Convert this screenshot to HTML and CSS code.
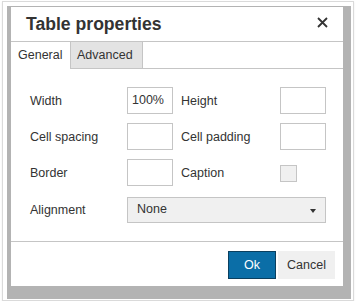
FILE: index.html
```html
<!DOCTYPE html>
<html>
<head>
<meta charset="utf-8">
<link rel="stylesheet" href="styles.css">
</head>
<body>
<div class="frame">
  <div class="backdrop">
    <div class="dialog">
      <div class="head">
        <h1 class="title">Table properties</h1>
        <span class="close" aria-label="Close">
          <svg width="11" height="11" viewBox="0 0 11 11"><path d="M1 1L10 10M10 1L1 10" stroke="#333" stroke-width="1.8" fill="none"/></svg>
        </span>
      </div>
      <div class="tabs">
        <div class="tab tab-general active">General</div>
        <div class="tab tab-advanced">Advanced</div>
        <div class="tab-fill"></div>
      </div>
      <div class="body">
        <div class="row">
          <span class="lbl">Width</span>
          <span class="input">100%</span>
          <span class="lbl lbl-r">Height</span>
          <span class="input"></span>
        </div>
        <div class="row">
          <span class="lbl">Cell spacing</span>
          <span class="input"></span>
          <span class="lbl lbl-r">Cell padding</span>
          <span class="input"></span>
        </div>
        <div class="row">
          <span class="lbl">Border</span>
          <span class="input"></span>
          <span class="lbl lbl-r">Caption</span>
          <span class="check-wrap"><span class="check"></span></span>
        </div>
        <div class="row row-select">
          <span class="lbl">Alignment</span>
          <span class="select">None<span class="caret"></span></span>
        </div>
      </div>
      <div class="foot">
        <span class="btn btn-ok">Ok</span>
        <span class="btn btn-cancel">Cancel</span>
      </div>
    </div>
  </div>
</div>
</body>
</html>
```
FILE: styles.css
```css
* { box-sizing: border-box; }
html, body { margin: 0; padding: 0; background: #fff; }
body {
  font-family: "Liberation Sans", Arial, Helvetica, sans-serif;
  font-size: 12.5px;
  color: #333;
}
.frame {
  margin: 1px 0 0 2px;
  width: 352px;
  height: 300px;
  border: 1px solid #dadada;
  padding: 4px 0 0 4px;
  box-shadow: 0 1px 2px rgba(0,0,0,0.08);
}
.backdrop {
  width: 344px;
  height: 293px;
  background: #b3b3b3;
  padding: 1px 8px 0 4px;
}
.dialog {
  width: 332px;
  height: 279px;
  background: #fff;
  display: flex;
  flex-direction: column;
}
.head {
  height: 35px;
  border-bottom: 1px solid #c5c5c5;
  display: flex;
  align-items: center;
  justify-content: space-between;
  padding: 0 15px 1px 15px;
}
.title {
  margin: 0;
  font-size: 17.6px;
  font-weight: bold;
  color: #333;
  line-height: 20px;
}
.close {
  width: 11px;
  height: 11px;
  display: block;
  margin-top: -3px;
}
.close svg { display: block; }
.tabs {
  height: 27px;
  display: flex;
}
.tab {
  height: 27px;
  line-height: 26px;
  border-right: 1px solid #c5c5c5;
  color: #333;
}
.tab-general {
  width: 60px;
  padding-left: 7px;
  background: #fff;
}
.tab-advanced {
  width: 72px;
  padding-left: 6px;
  background: #e3e3e3;
  border-bottom: 1px solid #c5c5c5;
}
.tab-fill {
  flex: 1;
  border-bottom: 1px solid #c5c5c5;
}
.body {
  height: 172px;
  padding: 18px 0 0 19px;
  display: flex;
  flex-direction: column;
  gap: 9px;
}
.row {
  display: flex;
  align-items: center;
  height: 27px;
}
.row-select {
  margin-top: 2px;
  height: 26px;
}
.lbl {
  width: 97px;
  color: #333;
}
.lbl-r {
  width: 107px;
  padding-left: 8px;
}
.input {
  width: 46px;
  height: 27px;
  border: 1px solid #c5c5c5;
  background: #fff;
  line-height: 25px;
  padding-left: 4px;
  color: #333;
}
.check-wrap {
  width: 46px;
  height: 27px;
  display: flex;
  align-items: center;
}
.check {
  display: block;
  width: 17px;
  height: 17px;
  margin-top: 2px;
  border: 1px solid #c5c5c5;
  background: #f0f0f0;
}
.select {
  position: relative;
  width: 199px;
  height: 26px;
  border: 1px solid #c5c5c5;
  background: #f0f0f0;
  line-height: 22px;
  padding-left: 9px;
  color: #333;
}
.caret {
  position: absolute;
  right: 9px;
  top: 11px;
  width: 0;
  height: 0;
  border-left: 3px solid transparent;
  border-right: 3px solid transparent;
  border-top: 4px solid #333;
}
.foot {
  flex: 1;
  border-top: 1px solid #c5c5c5;
  display: flex;
  justify-content: flex-end;
  align-items: flex-start;
  padding: 9px 8px 0 0;
  gap: 2px;
}
.btn {
  height: 28px;
  line-height: 26px;
  text-align: center;
  border: 1px solid transparent;
}
.btn-ok {
  width: 48px;
  background: #0b6ea7;
  border-color: #0a3f5f;
  color: #fff;
}
.btn-cancel {
  width: 57px;
  background: #f0f0f0;
  border-color: #f0f0f0;
  color: #333;
}
```
